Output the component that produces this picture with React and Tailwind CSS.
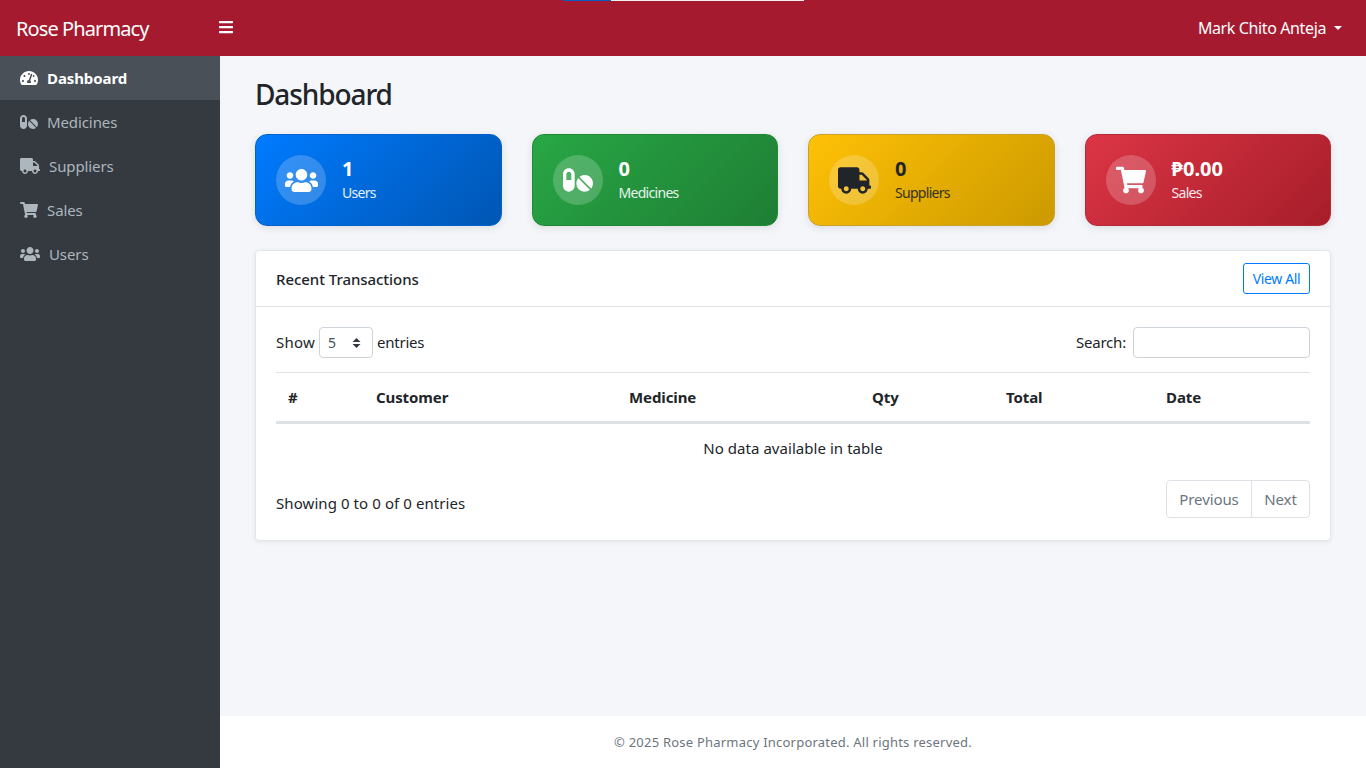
import React from 'react';
import { FaBars, FaTachometerAlt, FaPills, FaTruck, FaShoppingCart, FaUsers } from 'react-icons/fa';

const nav = [
    { label: 'Dashboard', icon: FaTachometerAlt, active: true },
    { label: 'Medicines', icon: FaPills },
    { label: 'Suppliers', icon: FaTruck },
    { label: 'Sales', icon: FaShoppingCart },
    { label: 'Users', icon: FaUsers },
];

const stats = [
    { value: '1', label: 'Users', icon: FaUsers, size: 33, bg: 'from-[#007bff] to-[#0056b3]', text: 'text-white', line: 'border-[#0062cc]' },
    { value: '0', label: 'Medicines', icon: FaPills, size: 30, bg: 'from-[#28a745] to-[#1e7e34]', text: 'text-white', line: 'border-[#218838]' },
    { value: '0', label: 'Suppliers', icon: FaTruck, size: 33, bg: 'from-[#ffc107] to-[#cc9a00]', text: 'text-[#212529]', line: 'border-[#c9a227]' },
    { value: '₱0.00', label: 'Sales', icon: FaShoppingCart, size: 30, bg: 'from-[#dc3545] to-[#a71d2a]', text: 'text-white', line: 'border-[#b52a38]' },
];

const columns = [
    { label: '#', width: 'w-[100px]' },
    { label: 'Customer', width: 'w-[253px]' },
    { label: 'Medicine', width: 'w-[243px]' },
    { label: 'Qty', width: 'w-[134px]' },
    { label: 'Total', width: 'w-[160px]' },
    { label: 'Date', width: 'flex-1' },
];

function StatCard({ stat }) {
    const Icon = stat.icon;
    return (
        <div className={`h-[92px] rounded-[12px] border bg-linear-135 ${stat.bg} ${stat.line} ${stat.text} shadow-[0_2px_8px_rgba(0,0,0,0.1)] flex items-center pl-[20px] gap-[16px]`}>
            <div className="w-[50px] h-[50px] rounded-full bg-white/20 flex items-center justify-center shrink-0">
                <Icon size={stat.size} />
            </div>
            <div>
                <div className="text-[20px] leading-[24px] font-bold">{stat.value}</div>
                <div className="text-[14px] leading-[21px] mt-[1px] tracking-[-0.7px] opacity-90">{stat.label}</div>
            </div>
        </div>
    );
}

export default function App() {
    return (
        <div className="relative min-h-[768px] flex flex-col bg-[#f4f6f9] text-[#212529] font-['Noto_Sans','Open_Sans',sans-serif] text-[16px]">
            <div className="absolute top-0 left-[563px] w-[241px] h-px bg-[#eeeeee]">
                <div className="w-[48px] h-px bg-[#0b5cc2]" />
            </div>

            <header className="h-[56px] bg-[#a61a30] text-white flex items-center shrink-0">
                <div className="w-[218px] pl-[16px] text-[20px] tracking-[-0.9px] leading-none pt-[2px]">Rose Pharmacy</div>
                <FaBars size={16} className="-mt-[2px]" />
                <div className="ml-auto mr-[24px] flex items-center gap-[8px] text-[16px] tracking-[-0.38px]">
                    Mark Chito Anteja
                    <span className="w-0 h-0 border-x-[4.5px] border-x-transparent border-t-[4.5px] border-t-white" />
                </div>
            </header>

            <div className="flex flex-1">
                <aside className="w-[220px] bg-[#343a40] shrink-0">
                    {nav.map((item) => (
                        <div key={item.label} className={`h-[44px] pl-[20px] flex items-center gap-[9px] text-[15px] tracking-[-0.1px] ${item.active ? 'bg-[#495057] text-white font-bold' : 'text-[#adb5bd]'}`}>
                            <item.icon size={item.label === 'Suppliers' || item.label === 'Users' ? 20 : 18} className={item.active ? 'text-white' : 'text-[#adb5bd]'} />
                            {item.label}
                        </div>
                    ))}
                </aside>

                <div className="flex-1 flex flex-col">
                    <main className="flex-1 px-[35px] pt-[20px]">
                        <h1 className="text-[28px] leading-[36px] font-medium tracking-[-1.1px] mb-[22px]">Dashboard</h1>

                        <div className="grid grid-cols-4 gap-[30px] mb-[24px]">
                            {stats.map((stat) => <StatCard key={stat.label} stat={stat} />)}
                        </div>

                        <section className="h-[291px] bg-white border border-[#e3e6ea] rounded-[4px] shadow-[0_1px_4px_rgba(0,0,0,0.08)]">
                            <div className="h-[56px] border-b border-[#dee2e6] px-[20px] flex items-center justify-between">
                                <h2 className="text-[15px] font-medium tracking-[-0.05px] pt-[2px]">Recent Transactions</h2>
                                <button className="h-[31px] w-[67px] border border-[#007bff] rounded-[3px] text-[#007bff] text-[14px] tracking-[-0.35px]">View All</button>
                            </div>

                            <div className="px-[20px] pt-[20px]">
                                <div className="flex items-center justify-between h-[31px] text-[15px] tracking-[-0.2px]">
                                    <div className="flex items-center gap-[4px] leading-[20px]">
                                        <span className="-mt-[2px] tracking-[0.2px]">Show</span>
                                        <div className="w-[54px] h-[31px] border border-[#ced4da] rounded-[4px] flex items-center justify-between pl-[8px] pr-[11px] text-[14px] text-[#495057]">
                                            5
                                            <svg width="9" height="12" viewBox="0 0 9 12" fill="#343a40"><path d="M4.5 1 8.5 5H.5zM4.5 11 .5 7h8z" /></svg>
                                        </div>
                                        <span className="-mt-[2px]">entries</span>
                                    </div>
                                    <div className="flex items-center gap-[7px]">
                                        Search:
                                        <input className="w-[177px] h-[31px] border border-[#ced4da] rounded-[4px] bg-white" />
                                    </div>
                                </div>

                                <div className="mt-[14px] border-t border-[#dee2e6] border-b-[3px] border-b-[#dee2e6] h-[52px] flex items-center text-[15px] font-bold tracking-[-0.1px]">
                                    {columns.map((col, i) => (
                                        <div key={col.label} className={`${col.width} ${i === 0 ? 'pl-[12px]' : ''}`}>{col.label}</div>
                                    ))}
                                </div>

                                <div className="h-[48px] flex items-center justify-center text-[15px] tracking-[0.05px]">No data available in table</div>

                                <div className="flex items-start justify-between text-[15px] tracking-[0.08px] mt-[8px]">
                                    <div className="mt-[12px]">Showing 0 to 0 of 0 entries</div>
                                    <div className="flex h-[38px] border border-[#dee2e6] rounded-[4px] text-[#6c757d] tracking-[-0.1px]">
                                        <span className="w-[85px] flex items-center justify-center border-r border-[#dee2e6]">Previous</span>
                                        <span className="w-[57px] flex items-center justify-center">Next</span>
                                    </div>
                                </div>
                            </div>
                        </section>
                    </main>

                    <footer className="h-[52px] pt-[2px] bg-white flex items-center justify-center text-[13px] tracking-[0.22px] text-[#6c757d] shrink-0">
                        © 2025 Rose Pharmacy Incorporated. All rights reserved.
                    </footer>
                </div>
            </div>
        </div>
    );
}
